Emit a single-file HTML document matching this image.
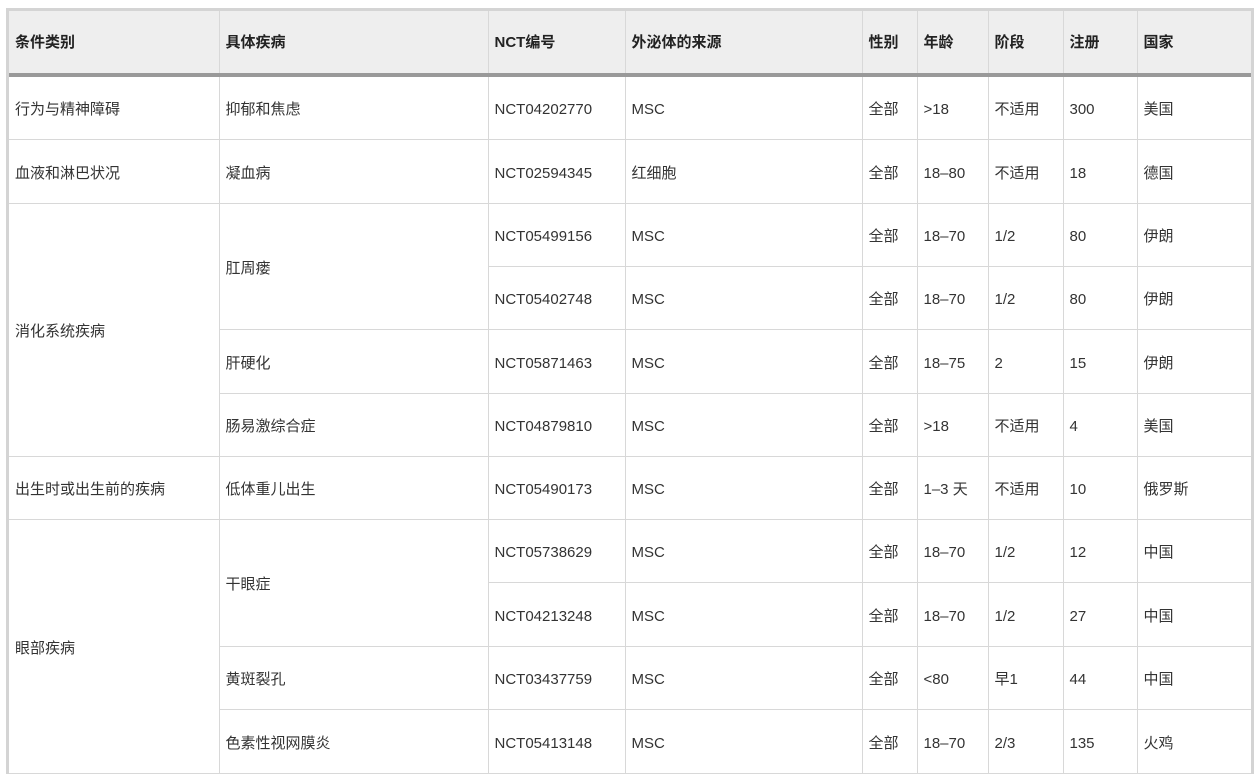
<!DOCTYPE html>
<html><head><meta charset="utf-8"><style>
body{margin:0;background:#fff;width:1259px;height:776px;overflow:hidden;font-family:"Liberation Sans","Noto Sans CJK SC",sans-serif;font-size:15px;line-height:20px;color:#333}
.wrap{position:absolute;left:6px;top:8px;border:3px solid #d4d4d4;border-bottom:none;width:1242px}
table{border-collapse:collapse;table-layout:fixed;width:1242px}
td,th{border:1px solid #d8d8d8;padding:5px 6px 0;text-align:left;vertical-align:middle;overflow:hidden;white-space:nowrap;line-height:20px}
th{background:#eee;height:60px;font-weight:bold;color:#222;border-top:none;border-bottom:4px solid #999;padding-top:2px}
tr td:first-child,tr th:first-child{border-left:none}
tr td:last-child,tr th:last-child{border-right:none}
</style></head><body><div class="wrap"><table>
<colgroup><col style="width:210px"><col style="width:269px"><col style="width:137px"><col style="width:237px"><col style="width:55px"><col style="width:71px"><col style="width:75px"><col style="width:74px"><col></colgroup>
<tr><th>条件类别</th><th>具体疾病</th><th>NCT编号</th><th>外泌体的来源</th><th>性别</th><th>年龄</th><th>阶段</th><th>注册</th><th>国家</th></tr>
<tr style="height:64px"><td>行为与精神障碍</td><td>抑郁和焦虑</td><td>NCT04202770</td><td>MSC</td><td>全部</td><td>&gt;18</td><td>不适用</td><td>300</td><td>美国</td></tr>
<tr style="height:64px"><td>血液和淋巴状况</td><td>凝血病</td><td>NCT02594345</td><td>红细胞</td><td>全部</td><td>18–80</td><td>不适用</td><td>18</td><td>德国</td></tr>
<tr style="height:63px"><td rowspan="4">消化系统疾病</td><td rowspan="2">肛周瘘</td><td>NCT05499156</td><td>MSC</td><td>全部</td><td>18–70</td><td>1/2</td><td>80</td><td>伊朗</td></tr>
<tr style="height:63px"><td>NCT05402748</td><td>MSC</td><td>全部</td><td>18–70</td><td>1/2</td><td>80</td><td>伊朗</td></tr>
<tr style="height:64px"><td>肝硬化</td><td>NCT05871463</td><td>MSC</td><td>全部</td><td>18–75</td><td>2</td><td>15</td><td>伊朗</td></tr>
<tr style="height:63px"><td>肠易激综合症</td><td>NCT04879810</td><td>MSC</td><td>全部</td><td>&gt;18</td><td>不适用</td><td>4</td><td>美国</td></tr>
<tr style="height:63px"><td>出生时或出生前的疾病</td><td>低体重儿出生</td><td>NCT05490173</td><td>MSC</td><td>全部</td><td>1–3 天</td><td>不适用</td><td>10</td><td>俄罗斯</td></tr>
<tr style="height:63px"><td rowspan="4">眼部疾病</td><td rowspan="2">干眼症</td><td>NCT05738629</td><td>MSC</td><td>全部</td><td>18–70</td><td>1/2</td><td>12</td><td>中国</td></tr>
<tr style="height:64px"><td>NCT04213248</td><td>MSC</td><td>全部</td><td>18–70</td><td>1/2</td><td>27</td><td>中国</td></tr>
<tr style="height:63px"><td>黄斑裂孔</td><td>NCT03437759</td><td>MSC</td><td>全部</td><td>&lt;80</td><td>早1</td><td>44</td><td>中国</td></tr>
<tr style="height:64px"><td>色素性视网膜炎</td><td>NCT05413148</td><td>MSC</td><td>全部</td><td>18–70</td><td>2/3</td><td>135</td><td>火鸡</td></tr>
</table></div></body></html>
